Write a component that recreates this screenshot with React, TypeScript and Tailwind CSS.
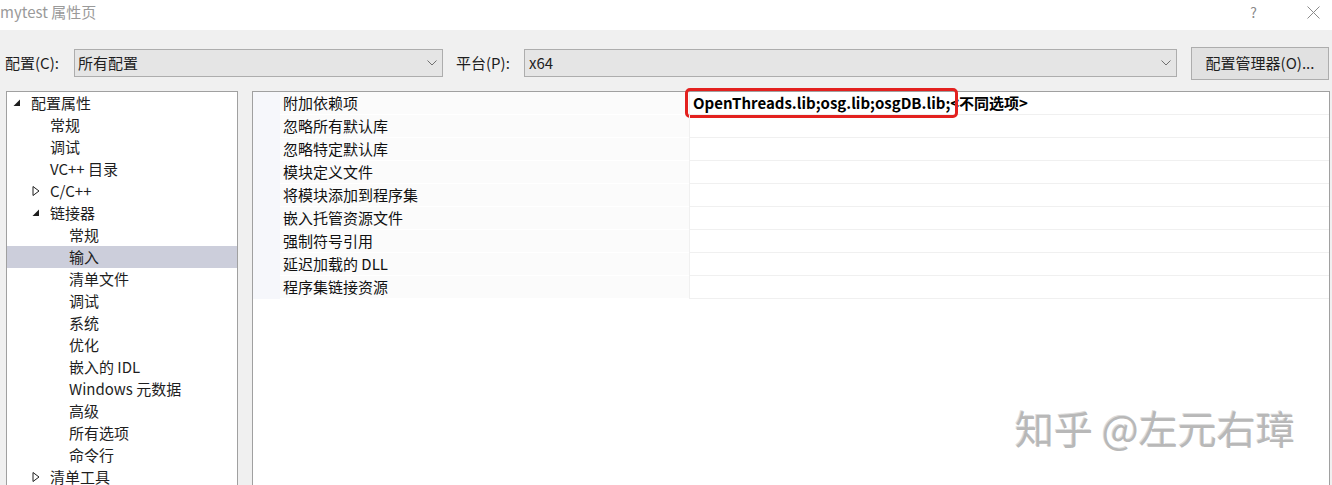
import React from "react";

const FONT = '"Noto Sans CJK SC", "Noto Sans", sans-serif';

function Expanded() {
  return (
    <svg width="8" height="8" viewBox="0 0 8 8" className="shrink-0">
      <polygon points="7,0.5 7,7 0.5,7" fill="#1e1e1e" />
    </svg>
  );
}
function Collapsed() {
  return (
    <svg width="8" height="10" viewBox="0 0 8 10" className="shrink-0">
      <polygon points="1,0.5 7,5 1,9.5" fill="none" stroke="#1e1e1e" strokeWidth="1" />
    </svg>
  );
}
function Chevron() {
  return (
    <svg width="10" height="6" viewBox="0 0 10 6">
      <polyline points="0.5,0.5 5,5 9.5,0.5" fill="none" stroke="#707070" strokeWidth="1" />
    </svg>
  );
}

type TreeItem = { label: string; level: number; icon?: "exp" | "col"; selected?: boolean };
const tree: TreeItem[] = [
  { label: "配置属性", level: 0, icon: "exp" },
  { label: "常规", level: 1 },
  { label: "调试", level: 1 },
  { label: "VC++ 目录", level: 1 },
  { label: "C/C++", level: 1, icon: "col" },
  { label: "链接器", level: 1, icon: "exp" },
  { label: "常规", level: 2 },
  { label: "输入", level: 2, selected: true },
  { label: "清单文件", level: 2 },
  { label: "调试", level: 2 },
  { label: "系统", level: 2 },
  { label: "优化", level: 2 },
  { label: "嵌入的 IDL", level: 2 },
  { label: "Windows 元数据", level: 2 },
  { label: "高级", level: 2 },
  { label: "所有选项", level: 2 },
  { label: "命令行", level: 2 },
  { label: "清单工具", level: 1, icon: "col" },
];

const rows = [
  "附加依赖项",
  "忽略所有默认库",
  "忽略特定默认库",
  "模块定义文件",
  "将模块添加到程序集",
  "嵌入托管资源文件",
  "强制符号引用",
  "延迟加载的 DLL",
  "程序集链接资源",
];

export default function App() {
  return (
    <div
      className="w-[1332px] h-[485px] overflow-hidden bg-[#f0f0f0] text-[15px] text-[#1e1e1e] flex flex-col"
      style={{ fontFamily: FONT }}
    >
      {/* Title bar */}
      <div className="h-[30px] shrink-0 bg-white flex items-center">
        <span className="text-[#9a9a9a] leading-none -mt-[7px]">mytest 属性页</span>
        <div className="flex-1" />
        <span className="text-[#8a8a8a] text-[14px] leading-none -mt-[6px] mr-[50px]">?</span>
        <svg width="13" height="13" viewBox="0 0 13 13" className="mr-[12px] -mt-[5px]">
          <line x1="0.5" y1="0.5" x2="12.5" y2="12.5" stroke="#8a8a8a" strokeWidth="1" />
          <line x1="12.5" y1="0.5" x2="0.5" y2="12.5" stroke="#8a8a8a" strokeWidth="1" />
        </svg>
      </div>

      {/* Toolbar */}
      <div className="shrink-0 pt-[19px] h-[61px]">
        <div className="h-[28px] flex items-center">
          <span className="ml-[5px] w-[69px] leading-none -mt-[1px]">配置(C):</span>
          <div className="w-[369px] h-[28px] border border-[#adadad] bg-[#e5e5e5] flex items-center pl-[3px] pr-[5px]">
            <span className="flex-1 leading-none -mt-[1px]">所有配置</span>
            <Chevron />
          </div>
          <span className="ml-[13px] w-[68px] leading-none -mt-[1px]">平台(P):</span>
          <div className="w-[653px] h-[28px] border border-[#adadad] bg-[#e5e5e5] flex items-center pl-[4px] pr-[5px]">
            <span className="flex-1 leading-none -mt-[1px]">x64</span>
            <Chevron />
          </div>
          <div className="ml-[14px] w-[138px] h-[33px] border border-[#adadad] bg-[#e1e1e1] flex items-center justify-center leading-none">
            <span className="-mt-[1px]">配置管理器(O)...</span>
          </div>
        </div>
      </div>

      {/* Panels */}
      <div className="flex-1 flex min-h-0">
        <div className="ml-[6px] w-[232px] border border-[#a0a0a0] border-b-0 bg-white overflow-hidden">
          {tree.map((t, i) => (
            <div
              key={i}
              className={`h-[22px] flex items-center ${t.selected ? "bg-[#cccedb]" : ""}`}
            >
              <div
                className="flex items-center"
                style={{ paddingLeft: 6 + t.level * 19 }}
              >
                <span className="w-[18px] flex items-center">
                  {t.icon === "exp" ? <Expanded /> : t.icon === "col" ? <Collapsed /> : null}
                </span>
                <span className="leading-none whitespace-nowrap -mt-[2px]">{t.label}</span>
              </div>
            </div>
          ))}
        </div>

        <div className="ml-[14px] w-[1078px] border border-[#a0a0a0] border-b-0 bg-white relative">
          <div className="flex flex-col">
            {rows.map((r, i) => (
              <div key={i} className="h-[23px] flex">
                <div className="w-[27px] bg-[#f6f7fb]" />
                <div className="w-[409px] bg-[#fbfbfb] border-b border-white flex items-center pl-[3px] text-[#111]">
                  <span className="leading-none -mt-[2px]">{r}</span>
                </div>
                <div className="flex-1 border-l border-[#f0f0f0] border-b border-b-[#f0f0f0] flex items-center pl-[3px] relative">
                  {i === 0 && (
                    <>
                      <span className="leading-none font-bold text-black whitespace-nowrap -mt-[2px]">
                        OpenThreads.lib;osg.lib;osgDB.lib;&lt;不同选项&gt;
                      </span>
                      <div className="absolute left-[-5px] top-[-4px] w-[273px] h-[30px] border-[3px] border-[#e3211f] rounded-[5px]" />
                    </>
                  )}
                </div>
              </div>
            ))}
          </div>
          <div
            className="absolute left-[762px] top-[316px] text-[39px] leading-none text-[#b8b8b8] whitespace-nowrap"
            style={{ textShadow: "1px 1px 0 #ffffff, -1px -1px 0 #dcdcdc" }}
          >
            知乎 @左元右璋
          </div>
        </div>
      </div>
    </div>
  );
}
